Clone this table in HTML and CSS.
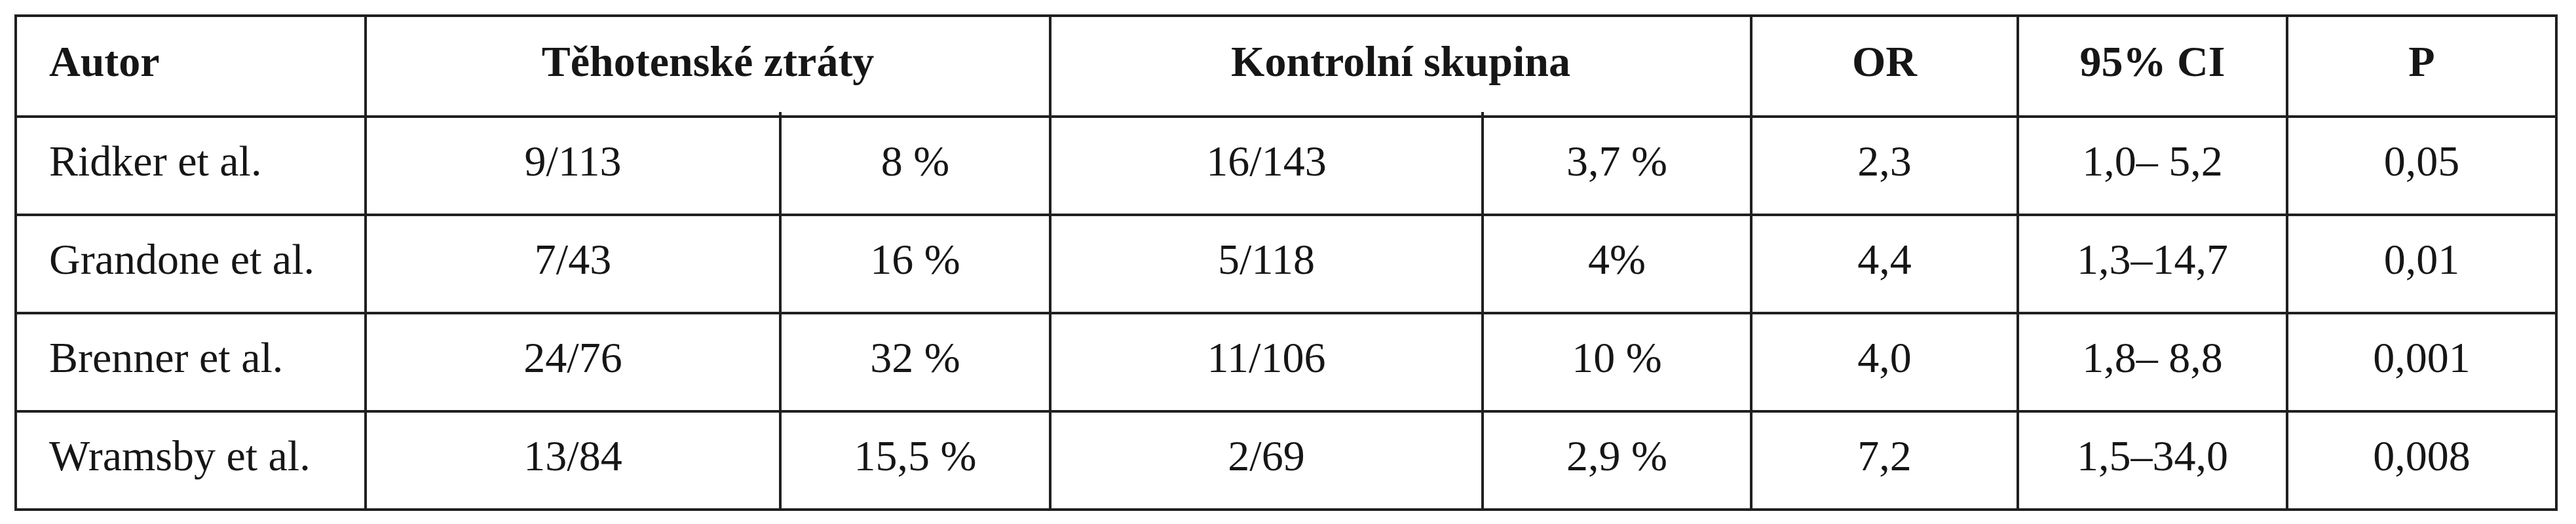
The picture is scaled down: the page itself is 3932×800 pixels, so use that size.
FILE: index.html
```html
<!DOCTYPE html>
<html lang="cs">
<head>
<meta charset="utf-8">
<title>Tabulka</title>
<link rel="stylesheet" href="styles.css">
</head>
<body>
<table class="data">
  <colgroup>
    <col class="c-autor">
    <col class="c-a">
    <col class="c-b">
    <col class="c-c">
    <col class="c-d">
    <col class="c-or">
    <col class="c-ci">
    <col class="c-p">
  </colgroup>
  <thead>
    <tr class="head">
      <th class="left">Autor</th>
      <th colspan="2">Těhotenské ztráty</th>
      <th colspan="2">Kontrolní skupina</th>
      <th>OR</th>
      <th>95% CI</th>
      <th>P</th>
    </tr>
  </thead>
  <tbody>
    <tr class="first">
      <td class="left">Ridker et al.</td>
      <td>9/113</td>
      <td class="tick">8 %</td>
      <td>16/143</td>
      <td class="tick">3,7 %</td>
      <td>2,3</td>
      <td>1,0– 5,2</td>
      <td>0,05</td>
    </tr>
    <tr>
      <td class="left">Grandone et al.</td>
      <td>7/43</td>
      <td>16 %</td>
      <td>5/118</td>
      <td>4%</td>
      <td>4,4</td>
      <td>1,3–14,7</td>
      <td>0,01</td>
    </tr>
    <tr>
      <td class="left">Brenner et al.</td>
      <td>24/76</td>
      <td>32 %</td>
      <td>11/106</td>
      <td>10 %</td>
      <td>4,0</td>
      <td>1,8– 8,8</td>
      <td>0,001</td>
    </tr>
    <tr>
      <td class="left">Wramsby et al.</td>
      <td>13/84</td>
      <td>15,5 %</td>
      <td>2/69</td>
      <td>2,9 %</td>
      <td>7,2</td>
      <td>1,5–34,0</td>
      <td>0,008</td>
    </tr>
  </tbody>
</table>
</body>
</html>
```

FILE: styles.css
```css
html, body {
  margin: 0;
  padding: 0;
  background: #ffffff;
}

body {
  padding: 22px 0 0 22px;
  font-family: "Liberation Serif", "Times New Roman", serif;
  color: #161616;
}

.data {
  border-collapse: collapse;
  table-layout: fixed;
  width: 3882px;
  font-size: 66px;
}

.c-autor { width: 534px; }
.c-a { width: 633px; }
.c-b { width: 412px; }
.c-c { width: 660px; }
.c-d { width: 410px; }
.c-or { width: 407px; }
.c-ci { width: 411px; }
.c-p { width: 411px; }

.data th,
.data td {
  border: 4px solid #202020;
  padding: 0 0 14px 0;
  text-align: center;
  vertical-align: middle;
  white-space: nowrap;
  line-height: normal;
}

.data th {
  font-weight: bold;
}

.head {
  height: 154px;
}

.data tbody tr {
  height: 150px;
}

.data .left {
  text-align: left;
  padding-left: 49px;
}

.tick {
  position: relative;
}

.tick::before {
  content: "";
  position: absolute;
  left: -4px;
  top: -9px;
  width: 4px;
  height: 7px;
  background: #202020;
}
```
